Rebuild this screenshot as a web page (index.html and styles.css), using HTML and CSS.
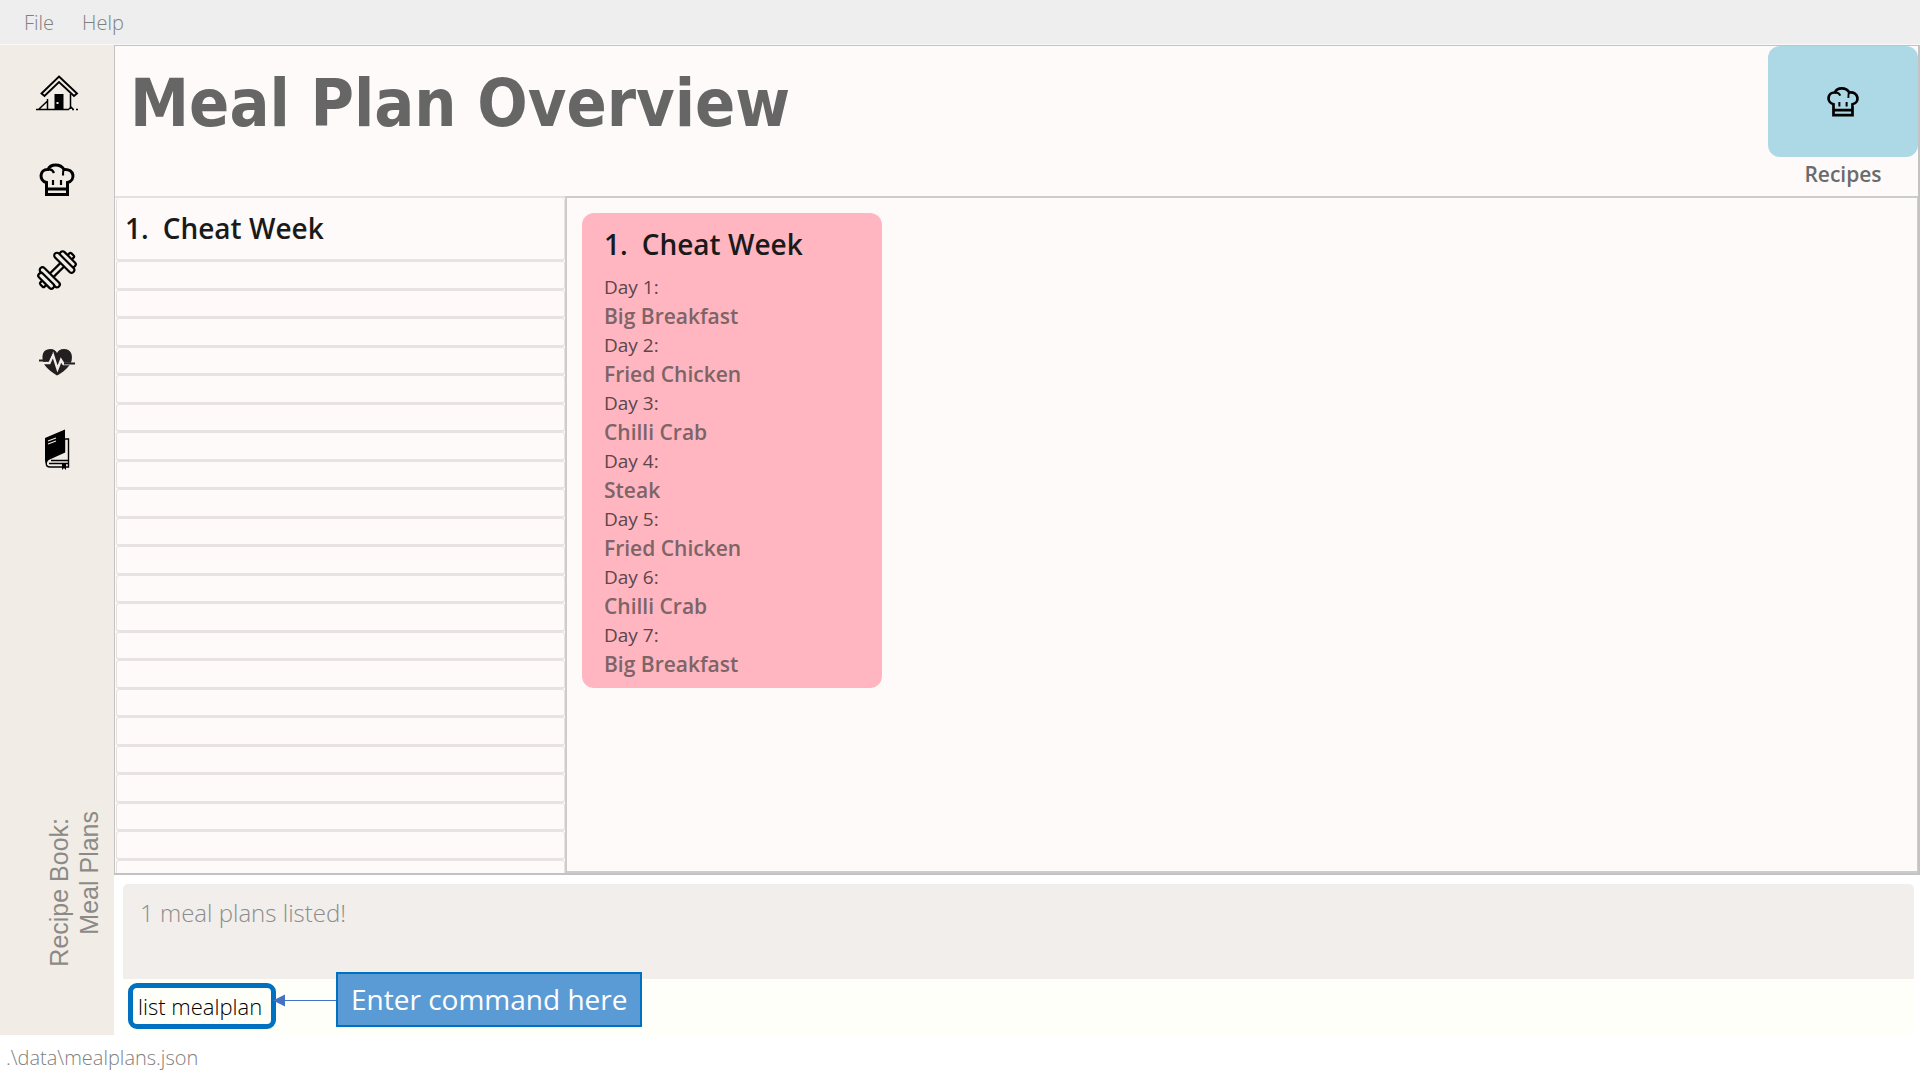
FILE: index.html
```html
<!DOCTYPE html>
<html lang="en">
<head>
<meta charset="utf-8">
<title>Recipe Book</title>
<link rel="stylesheet" href="styles.css">
</head>
<body>
<svg class="defs" aria-hidden="true">
  <symbol id="hat" viewBox="0 0 42 42">
    <path d="M10.500 23.500C2.500 21.500 3.500 10 12 10.500C14.500 4.500 24.500 4.500 28 10.500C38.500 9.500 40 21.500 31.500 23.500V35.500H10.500ZM10.500 30H31.500" fill="none" stroke="#000" stroke-width="3"/>
    <path d="M12 10.500C15 10 17 11.500 18 14M28 10C27 11.500 26.800 13 27 16.500M17 21V26M25 21V26" fill="none" stroke="#000" stroke-width="2.200"/>
  </symbol>
</svg>
<div class="app">
  <header class="menubar">
    <button class="menu" type="button">File</button>
    <button class="menu" type="button">Help</button>
  </header>
  <div class="body">
    <aside class="sidebar">
      <nav class="nav">
        <button type="button" class="nav-btn" aria-label="Home">
          <svg viewBox="0 0 42 42"><path d="M23 7.500L41 24.500L38 27L23 13L8.500 27L5.500 24.500Z" fill="none" stroke="#000" stroke-width="1.900"/><path d="M0 40.500H33M36 40.500H38M40 40.500H42M11.500 40V30M34.500 25V40M3 40L11 32.500M33 40L35 38L37 40" fill="none" stroke="#000" stroke-width="1.500"/><path d="M18.500 25H27.500V41H18.500Z"/><path d="M20.500 33H22.500V35H20.500Z" fill="#f1ede6"/></svg>
        </button>
        <button type="button" class="nav-btn" aria-label="Recipes"><svg><use href="#hat"/></svg></button>
        <button type="button" class="nav-btn" aria-label="Exercises">
          <svg viewBox="0 0 42 42"><g transform="rotate(45 21 21)" fill="#f1ede6" stroke="#000" stroke-width="2.200"><path d="M18.500 12H23.500V30H18.500Z"/><rect x="18" y="-1" width="6" height="6" rx="1.500"/><rect x="18" y="37" width="6" height="6" rx="1.500"/><rect x="11" y="3" width="20" height="5.500" rx="2.700"/><rect x="8" y="8" width="26" height="5.500" rx="2.700"/><rect x="8" y="28.500" width="26" height="5.500" rx="2.700"/><rect x="11" y="33.500" width="20" height="5.500" rx="2.700"/></g></svg>
        </button>
        <button type="button" class="nav-btn" aria-label="Health">
          <svg viewBox="0 0 42 42"><path d="M7 23C5 13 9 10 14.500 10C18 10 20 12 21 14C22 12 24 10 28 10C35 10 37 16 35.500 22C34 28 26 34 21 36.500C15 33 9 28 7 23Z" fill="#231f20"/><path d="M3 24H13.500L17 16L21.500 30L25 21L27.500 25H39" fill="none" stroke="#f1ede6" stroke-width="2.400"/><path d="M3 21.500H12L16 13.500M28 24.500H39" fill="none" stroke="#231f20" stroke-width="1.800"/></svg>
        </button>
        <button type="button" class="nav-btn" aria-label="Meal plans">
          <svg viewBox="0 0 42 42"><path d="M9 9L29 .5V22.500L14 29C11 31 10 33 11 36C9.500 34 9 33 9 31Z"/><path d="M29 10H32.500V38H14C9 38 9 31.500 14 29.500L28.500 23V10M15 31.500H32M13 34.500H32" fill="none" stroke="#000" stroke-width="1.400"/><path d="M26 34H30V41L28 39L26 41Z"/><path d="M12 12L20 9M12 15L20 12" stroke="#f1ede6" stroke-width="1.200"/></svg>
        </button>
      </nav>
      <div class="mode"><div>Recipe Book:</div><div class="mode-name">Meal Plans</div></div>
    </aside>
    <main class="main">
      <section class="overview">
        <div class="head">
          <h1 class="title">Meal Plan Overview</h1>
          <div class="shortcut">
            <button type="button" class="tile" id="recipes" aria-labelledby="recipes-label"><svg><use href="#hat"/></svg></button>
            <label class="tile-label" id="recipes-label" for="recipes">Recipes</label>
          </div>
        </div>
        <div class="columns">
          <ul class="list">
            <li class="row row-filled"><span>1.</span><span>Cheat Week</span></li>
            <li class="row"></li><li class="row"></li><li class="row"></li><li class="row"></li><li class="row"></li><li class="row"></li>
            <li class="row"></li><li class="row"></li><li class="row"></li><li class="row"></li><li class="row"></li><li class="row"></li>
            <li class="row"></li><li class="row"></li><li class="row"></li><li class="row"></li><li class="row"></li><li class="row"></li>
            <li class="row"></li><li class="row"></li><li class="row"></li><li class="row"></li>
          </ul>
          <div class="detail">
            <article class="card">
              <h2 class="card-title"><span>1.</span><span>Cheat Week</span></h2>
              <dl class="days">
                <dt>Day 1:</dt><dd>Big Breakfast</dd>
                <dt>Day 2:</dt><dd>Fried Chicken</dd>
                <dt>Day 3:</dt><dd>Chilli Crab</dd>
                <dt>Day 4:</dt><dd>Steak</dd>
                <dt>Day 5:</dt><dd>Fried Chicken</dd>
                <dt>Day 6:</dt><dd>Chilli Crab</dd>
                <dt>Day 7:</dt><dd>Big Breakfast</dd>
              </dl>
            </article>
          </div>
        </div>
      </section>
      <section class="console">
        <output class="result">1 meal plans listed!</output>
        <div class="command">
          <input class="command-input" type="text" aria-label="Command" value="list mealplan">
          <div class="callout">
            <svg class="arrow" viewBox="0 0 63 12" aria-hidden="true"><path d="M11 6.500H63" stroke="#4472c4"/><path d="M0 6.500L12 .5V12.500Z" fill="#4472c4"/></svg>
            <div class="callout-box">Enter command here</div>
          </div>
        </div>
      </section>
    </main>
  </div>
  <footer class="status">.\data\mealplans.json</footer>
</div>
</body>
</html>
```
FILE: styles.css
```css
* { box-sizing: border-box; }
body { margin: 0; background: #fff; font-family: "Open Sans", "Noto Sans", sans-serif; }
button, input { font: inherit; border: 0; padding: 0; background: none; color: inherit; }
h1, h2, ul, dl, dd { margin: 0; padding: 0; }
.defs { position: absolute; width: 0; height: 0; }
svg { display: block; }

.app { min-height: 100vh; display: flex; flex-direction: column; }
.menubar { height: 45px; flex: none; display: flex; align-items: center; gap: 28px; padding: 0 24px; background: #eee; border-bottom: 1px solid #f8f8f8; }
.menu { font-size: 20px; font-weight: 300; color: #808080; }
.body { flex: 1; display: flex; }

.sidebar { width: 114px; flex: none; display: flex; flex-direction: column; justify-content: space-between; align-items: center; padding: 24px 0 68px; background: #f1ede6; }
.nav { display: flex; flex-direction: column; gap: 48px; }
.nav-btn, .nav-btn svg { width: 42px; height: 42px; }
.nav-btn svg { overflow: visible; }
.mode { writing-mode: vertical-rl; transform: rotate(180deg); align-self: flex-end; margin-right: 10px; font: 25px/30px "Liberation Sans", Arial, sans-serif; color: #8c8a86; }
.mode-name { padding-top: 32px; }

.main { flex: 1; min-width: 0; display: flex; flex-direction: column; }
.overview { flex: 1; display: flex; flex-direction: column; background: #fefaf9; border: 1px solid #c3c3c3; border-width: 1px 2px 2px 1px; }
.head { height: 150px; display: flex; justify-content: space-between; align-items: flex-start; }
.title { padding: 13px 0 0 15px; font: bold 66px/90px "DejaVu Sans Condensed", "DejaVu Sans", sans-serif; color: #666; }
.shortcut { width: 150px; display: flex; flex-direction: column; }
.tile { height: 111px; display: grid; place-items: center; border-radius: 12px; background: #add8e6; }
.tile svg { width: 38px; height: 38px; }
.tile-label { font-size: 21px; line-height: 34px; font-weight: 600; text-align: center; color: #6b6b6b; }

.columns { flex: 1; display: flex; }
.list { width: 450px; height: 677px; overflow: hidden; list-style: none; padding-left: 1px; border-top: 2px solid #e6e0df; }
.row { height: 29px; border: 1px solid #e8e3e2; border-bottom-width: 2px; border-radius: 3px; }
.row:nth-child(odd) { height: 28px; }
.row-filled:first-child { height: 63px; border-top: 0; display: flex; gap: 14px; padding: 0 8px; font-size: 28px; line-height: 60px; font-weight: 600; color: #1a1a1a; }
.detail { flex: 1; padding: 15px; border: 1px solid #ccc; border-width: 2px 1px 2px 2px; }
.card { width: 300px; padding: 14px 22px 9px; border-radius: 12px; background: #ffb6c1; }
.card-title { display: flex; gap: 14px; font-size: 28px; line-height: 34px; font-weight: 600; color: #1a1a1a; padding-bottom: 12px; }
.days { line-height: 29px; }
.days dt { font-size: 19px; color: #5b4649; }
.days dd { font-size: 21px; font-weight: 600; color: #7c6467; }

.console { padding: 9px 6px 0 9px; }
.result { display: block; height: 95px; padding: 12px 17px; border-radius: 5px 5px 0 0; background: #f1eeeb; font-size: 24px; line-height: 34px; font-weight: 300; color: #8c8c8c; }
.command { position: relative; height: 56px; padding: 4px 5px; background: #fffffa; }
.command-input { display: block; width: 148px; height: 46px; padding: 0 5px; border: 5px solid #0070c0; border-radius: 9px; font-size: 22px; font-weight: 300; color: #000; }
.callout { position: absolute; left: 150px; top: -7px; display: flex; align-items: center; }
.arrow { width: 63px; height: 12px; overflow: visible; }
.callout-box { padding: 0 13px; border: 2px solid #0070c0; background: #5b9bd5; font-size: 28px; line-height: 51px; color: #fff; white-space: nowrap; }

.status { height: 45px; flex: none; padding-left: 6px; font-size: 20px; line-height: 46px; font-weight: 300; color: #808080; }
```
